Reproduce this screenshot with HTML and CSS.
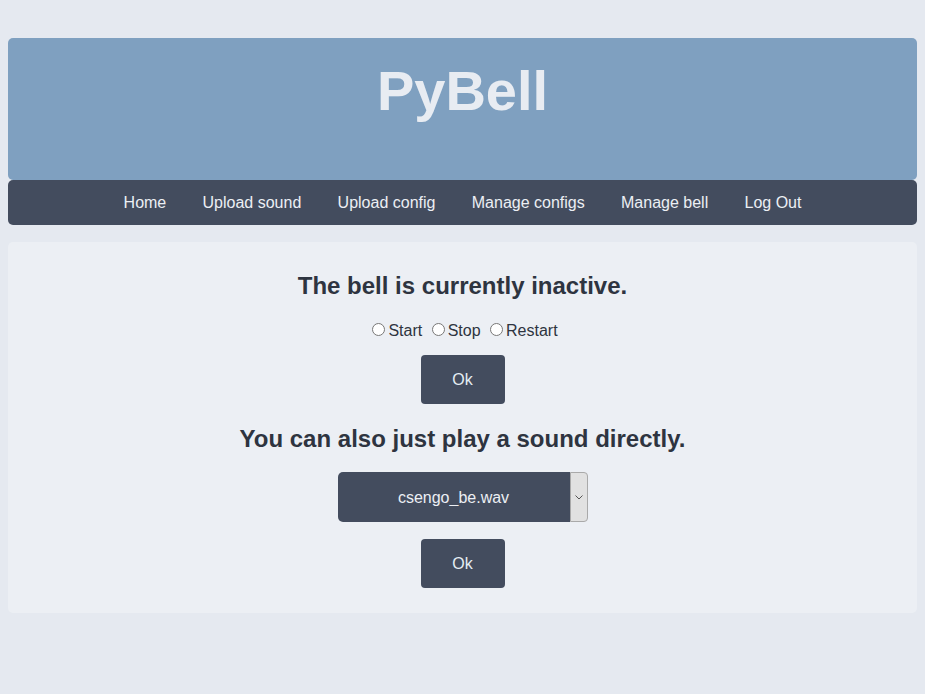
FILE: index.html
```html
<!DOCTYPE html>
<html lang="en">
<head>
<meta charset="utf-8">
<title>PyBell</title>
<link rel="stylesheet" href="styles.css">
</head>
<body>
<div class="page">
  <header class="header">
    <h1 class="title">PyBell</h1>
  </header>
  <nav class="nav">
    <a href="#" class="nav-link">Home</a>
    <a href="#" class="nav-link">Upload sound</a>
    <a href="#" class="nav-link">Upload config</a>
    <a href="#" class="nav-link">Manage configs</a>
    <a href="#" class="nav-link">Manage bell</a>
    <a href="#" class="nav-link">Log Out</a>
  </nav>
  <main class="card">
    <h2 class="heading heading-first">The bell is currently inactive.</h2>
    <form class="radios">
      <input type="radio" name="action" id="start"><label for="start">Start</label>
      <input type="radio" name="action" id="stop"><label for="stop">Stop</label>
      <input type="radio" name="action" id="restart"><label for="restart">Restart</label>
    </form>
    <button class="btn btn-first" type="button">Ok</button>
    <h2 class="heading heading-second">You can also just play a sound directly.</h2>
    <div class="select-wrap">
      <select class="select">
        <option>csengo_be.wav</option>
      </select>
      <span class="select-arrow">
        <svg width="8" height="5" viewBox="0 0 8 5"><path d="M0.5 0.5 L4 4 L7.5 0.5" fill="none" stroke="#555" stroke-width="1"/></svg>
      </span>
    </div>
    <button class="btn btn-second" type="button">Ok</button>
  </main>
</div>
</body>
</html>
```

FILE: styles.css
```css
html, body {
  margin: 0;
  padding: 0;
  background: #e5e9f0;
}
body {
  font-family: "Liberation Sans", Arial, sans-serif;
  color: #2e3440;
}
.page {
  padding: 38px 8px 0;
}
.header {
  background: #7fa0c0;
  border-radius: 5px;
  height: 142px;
  padding-top: 20px;
  box-sizing: border-box;
}
.title {
  margin: 0;
  text-align: center;
  font-size: 56px;
  font-weight: bold;
  color: #e8ecf2;
}
.nav {
  background: #434c5e;
  border-radius: 5px;
  height: 45px;
  padding-top: 1px;
  box-sizing: border-box;
  display: flex;
  justify-content: center;
  align-items: center;
  gap: 36.3px;
}
.nav-link {
  color: #eceff4;
  text-decoration: none;
  font-size: 16px;
}
.card {
  margin-top: 17px;
  background: #eceff4;
  border-radius: 5px;
  display: flex;
  flex-direction: column;
  align-items: center;
  padding: 30px 0 25px;
}
.heading {
  margin: 0;
  font-size: 24px;
  font-weight: bold;
  color: #2e3440;
  line-height: 28px;
}
.radios {
  margin-top: 20px;
  font-size: 16px;
  line-height: 18px;
}
.radios input {
  margin: 3px 3px 0 5px;
}
.btn {
  width: 84px;
  height: 49px;
  border: none;
  border-radius: 4px;
  background: #434c5e;
  color: #e5eef4;
  font-family: "Liberation Sans", Arial, sans-serif;
  font-size: 16px;
  padding: 0;
}
.btn-first {
  margin-top: 15px;
}
.heading-second {
  margin-top: 21px;
}
.select-wrap {
  margin-top: 19px;
  display: flex;
  width: 250px;
  height: 50px;
}
.select {
  appearance: none;
  -webkit-appearance: none;
  flex: 1;
  border: none;
  border-radius: 5px 0 0 5px;
  background: #434c5e;
  color: #eceff4;
  font-family: "Liberation Sans", Arial, sans-serif;
  font-size: 16px;
  text-align: center;
  text-align-last: center;
  padding: 0;
  margin: 0;
}
.select-arrow {
  width: 16px;
  background: #e1e1e1;
  border: 1px solid #a9a9a9;
  border-radius: 0 4px 4px 0;
  display: flex;
  align-items: center;
  justify-content: center;
}
.btn-second {
  margin-top: 17px;
}
```
